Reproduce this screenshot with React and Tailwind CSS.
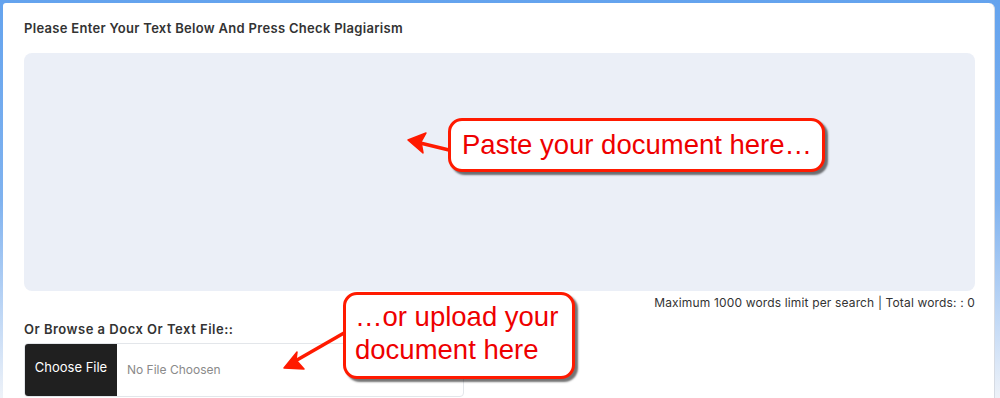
import React from 'react';

const ui = { fontFamily: 'Inter, "Open Sans", sans-serif' };
const callout = { fontFamily: '"Liberation Sans", Arial, sans-serif' };

export default function App() {
  return (
    <div className="relative w-[1000px] h-[398px] overflow-hidden bg-gradient-to-b from-[#64a3ee] via-[#7fb2ef] to-[#eef2f8] pl-[3px] pt-[3px] pr-[5px]" style={ui}>
      <div className="h-full bg-white rounded-tl-[3px] rounded-tr-[6px] border-r border-[#d6dbe3] pl-[21px] pr-[19px] pt-[16px]">
        <h2 className="text-[13px] font-semibold text-[#333] tracking-[0.3px] leading-[18px]">
          Please Enter Your Text Below And Press Check Plagiarism
        </h2>
        <div className="mt-[16px] h-[238px] rounded-[8px] bg-[#ebeff7]" />
        <div className="flex justify-end mt-[3px]">
          <span className="text-[12px] text-[#333] leading-[18px] tracking-[0.15px]">
            Maximum 1000 words limit per search | Total words: : 0
          </span>
        </div>
        <div className="mt-[8px] text-[13px] font-semibold text-[#333] tracking-[0.5px] leading-[18px]">
          Or Browse a Docx Or Text File::
        </div>
        <div className="mt-[5px] flex w-[440px] h-[54px] rounded-[4px] border border-[#e3e6ea] overflow-hidden">
          <div className="w-[92px] bg-[#202020] text-white text-[13px] flex items-center justify-center pb-[4px]">
            Choose File
          </div>
          <div className="flex-1 flex items-center pl-[10px] text-[12px] text-[#8a8a8a]">
            No File Choosen
          </div>
        </div>
      </div>

      <svg className="absolute left-0 top-0" width="1000" height="398">
        <g stroke="#ff1a00" strokeWidth="3.5" fill="#ff1a00" strokeLinejoin="round">
          <line x1="449" y1="150" x2="412" y2="141" />
          <polygon points="408,140 426,133 421,142 423,153" strokeWidth="1.5" />
          <line x1="344" y1="333" x2="290" y2="364" />
          <polygon points="284,368 297,352 296,360 304,369" strokeWidth="1.5" />
        </g>
      </svg>
      <div
        className="absolute left-[448px] top-[118px] w-[377px] h-[54px] rounded-[14px] border-[3px] border-[#ff1a00] bg-white shadow-[3px_3px_2px_rgba(0,0,0,0.55)] flex items-center pl-[11px] text-[27.5px] text-[#ee0000]"
        style={callout}
      >
        Paste your document here…
      </div>
      <div
        className="absolute left-[343px] top-[292px] w-[232px] h-[87px] rounded-[14px] border-[3px] border-[#ff1a00] bg-white shadow-[3px_3px_2px_rgba(0,0,0,0.55)] pl-[9px] pt-[5px] text-[27.5px] leading-[33px] text-[#ee0000]"
        style={callout}
      >
        …or upload your
        <br />
        document here
      </div>
    </div>
  );
}
